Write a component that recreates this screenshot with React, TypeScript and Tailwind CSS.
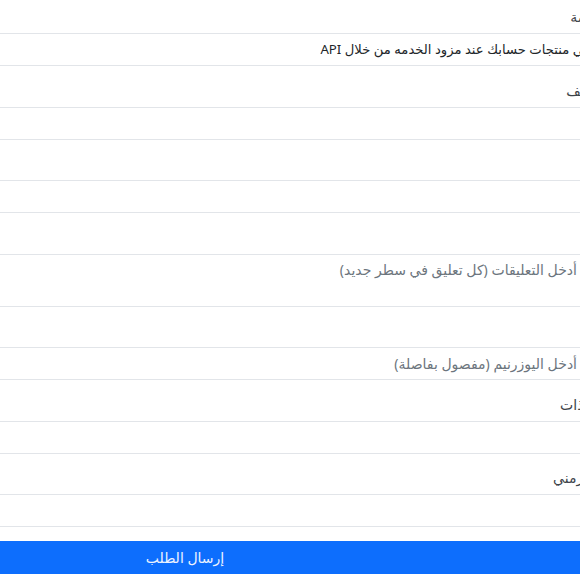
import React from 'react'

interface Field {
  label: string
  kind: 'select' | 'input' | 'textarea'
  placeholder?: string
  value?: string
}

const fields: Field[] = [
  { label: 'اختر الخدمة', kind: 'select', value: 'في منتجات حسابك عند مزود الخدمه من خلال API' },
  { label: 'حقل الوصف', kind: 'input' },
  { label: 'الرابط', kind: 'input' },
  { label: 'التعليقات', kind: 'textarea', placeholder: 'أدخل التعليقات (كل تعليق في سطر جديد)' },
  { label: 'اليوزرنيم', kind: 'input', placeholder: 'أدخل اليوزرنيم (مفصول بفاصلة)' },
  { label: 'عدد التنفيذات', kind: 'input' },
  { label: 'الفاصل الزمني', kind: 'input' },
]

export default function App() {
  return (
    <div className="w-[580px] h-[580px] overflow-hidden bg-white font-['Noto_Sans','DejaVu_Sans',sans-serif] text-[14px] text-[#212529]">
      <form dir="rtl" className="w-[830px] ml-[-230px] pt-[6px]">
        {fields.map((f) => (
          <div key={f.label} className="mb-[13.5px]">
            <label className="block h-[21px] leading-[21px] mb-[6px] mr-[-38px] whitespace-nowrap text-[#3d4349]">
              {f.label}
            </label>
            {f.kind === 'select' && (
              <div className="h-[33px] border border-[#e2e5e9] pr-[9px] flex items-center whitespace-nowrap text-[13.2px]">
                {f.value}
              </div>
            )}
            {f.kind === 'input' && (
              <input
                className="block w-full h-[33px] border border-[#e2e5e9] pr-[22px] outline-none placeholder:text-[#6c757d]"
                placeholder={f.placeholder}
              />
            )}
            {f.kind === 'textarea' && (
              <textarea
                className="block w-full h-[53px] border border-[#e2e5e9] pr-[22px] pt-[4px] leading-[22px] resize-none outline-none placeholder:text-[#6c757d]"
                placeholder={f.placeholder}
              />
            )}
          </div>
        ))}
        <button type="button" className="block w-full h-[33px] bg-[#0d6efd] text-[#eef4ff] text-center">
          إرسال الطلب
        </button>
      </form>
    </div>
  )
}
